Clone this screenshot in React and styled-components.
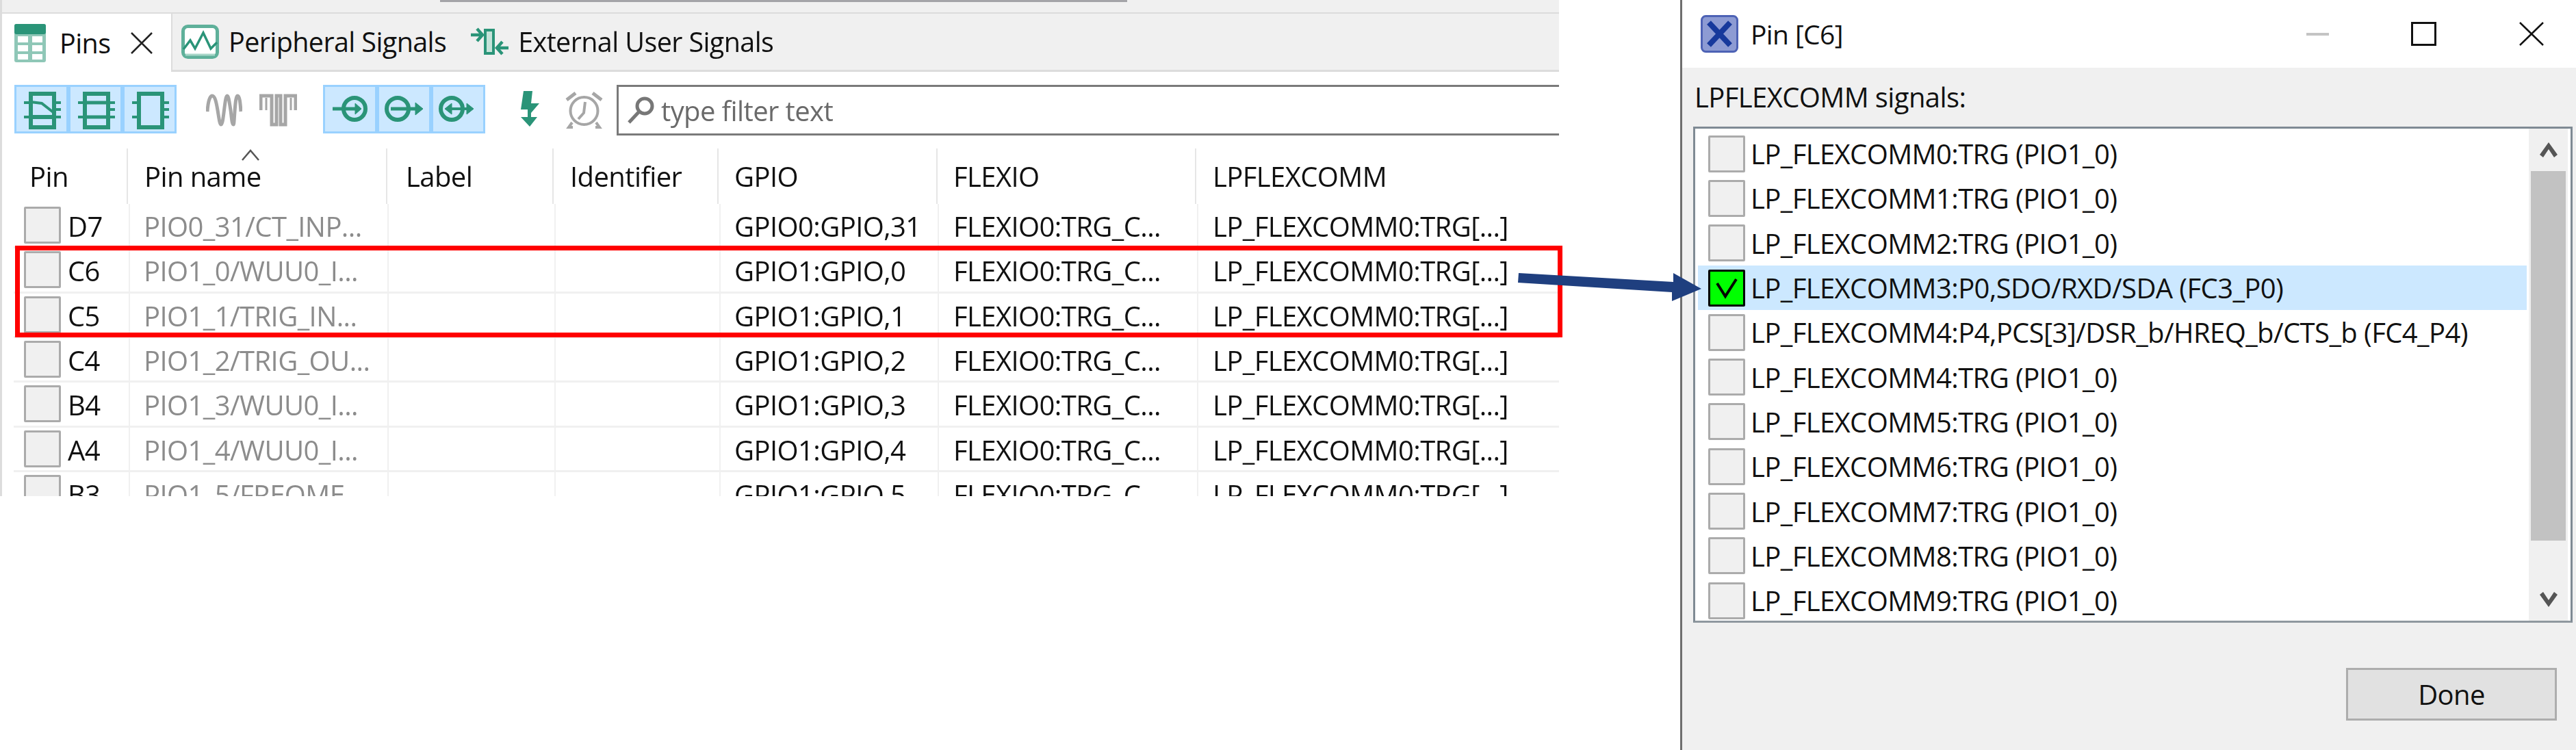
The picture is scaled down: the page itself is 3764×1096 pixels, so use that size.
import React from 'react';
import styled, { createGlobalStyle } from 'styled-components';

const GREEN = '#2a9478';
const GREY = '#a6a6a6';

const GlobalStyle = createGlobalStyle`
    html, body {
        margin: 0;
        padding: 0;
        background: #fff;
    }
    body {
        font-family: "Open Sans", "Noto Sans", sans-serif;
        font-size: 40px;
        font-stretch: 90%;
        letter-spacing: -0.6px;
        color: #111;
    }
`;

const Page = styled.div`
    position: relative;
    width: 3764px;
    height: 1096px;
    overflow: hidden;
    background: #fff;
`;

const Content = styled.div`
    display: flex;
    justify-content: space-between;
    height: 100%;
    filter: blur(0.4px);
`;

const PinsPanel = styled.div`
    box-sizing: border-box;
    width: 2278px;
    height: 725px;
    border-left: 3px solid #dcdcdc;
    overflow: hidden;
`;

const TopStrip = styled.div`
    box-sizing: border-box;
    height: 20px;
    background: #f0f0f0;
    border-bottom: 2px solid #dcdcdc;
`;

const TopBar = styled.div`
    width: 1004px;
    height: 3px;
    margin-left: 640px;
    background: #a4a4a8;
`;

const TabStrip = styled.div`
    box-sizing: border-box;
    display: flex;
    height: 85px;
    font-size: 39.5px;
    background: #f0f0f0;
    border-bottom: 3px solid #dcdcdc;
`;

const ActiveTab = styled.div`
    box-sizing: border-box;
    display: flex;
    align-items: center;
    width: 249px;
    height: 85px;
    padding-left: 18px;
    gap: 20px;
    background: #fff;
    border-right: 2px solid #dcdcdc;
`;

const Tab = styled.div`
    display: flex;
    align-items: center;
    gap: 14px;
    margin-left: ${props => props.$offset}px;
`;

const CloseIcon = styled.svg`
    margin-left: 9px;
`;

const Toolbar = styled.div`
    display: flex;
    align-items: flex-start;
    height: 74px;
    padding: 19px 0 0 18px;
`;

const ToggleGroup = styled.div`
    display: flex;
    margin-right: ${props => props.$gap}px;
`;

const ToggleCell = styled.div`
    box-sizing: border-box;
    width: 79px;
    height: 71px;
    background: #cce8ff;
    border: 3px solid #99d1ff;
    svg {
        display: block;
        margin: -3px;
    }
`;

const ToolIcon = styled.svg`
    flex: none;
    margin: ${props => props.$top}px ${props => props.$right}px 0 0;
`;

const FilterBox = styled.div`
    box-sizing: border-box;
    display: flex;
    align-items: center;
    flex: 1;
    gap: 9px;
    height: 74px;
    margin-left: 20px;
    padding-left: 13px;
    background: #fff;
    border: 3px solid #7a7a7a;
    border-right: 0;
    color: #6a6a6a;
`;

const HeaderRow = styled.div`
    display: grid;
    grid-template-columns: 184px 379px 243px 241px 320px 378px 530px;
    height: 81px;
    margin-top: 19px;
`;

const HeaderCell = styled.div`
    position: relative;
    display: flex;
    align-items: center;
    padding-left: ${props => props.$pad}px;
    border-right: 2px solid #e6e6e6;
    &:last-child {
        border-right: 0;
    }
`;

const SortCaret = styled.svg`
    position: absolute;
    left: 165px;
    top: 0;
`;

const PinRow = styled.div`
    box-sizing: border-box;
    display: grid;
    grid-template-columns: 170px 378px 244px 241px 319px 379px 527px;
    height: 65.33px;
    margin-left: 17px;
    border-bottom: 3px solid #f0f0f0;
`;

const PinCell = styled.div`
    display: flex;
    align-items: center;
    padding-left: ${props => props.$pad}px;
    white-space: nowrap;
    color: ${props => (props.$muted ? '#8c8c8c' : 'inherit')};
    border-right: 2px solid #f0f0f0;
    &:last-child {
        border-right: 0;
    }
`;

const PinText = styled.span`
    padding-top: 3px;
`;

const CheckBox = styled.span`
    box-sizing: border-box;
    display: flex;
    align-items: center;
    justify-content: center;
    flex: none;
    width: 54px;
    height: 54px;
    margin-right: ${props => props.$gap}px;
    background: ${props => (props.$checked ? '#00ff00' : '#f0f0f0')};
    border: 3px solid ${props => (props.$checked ? '#000' : '#ababab')};
    border-radius: 2px;
`;

const Dialog = styled.div`
    box-sizing: border-box;
    display: flex;
    flex-direction: column;
    width: 1309px;
    height: 1096px;
    background: #f0f0f0;
    border-left: 3px solid #6e6e6e;
`;

const TitleBar = styled.div`
    display: flex;
    align-items: center;
    height: 99px;
    padding-left: 27px;
    background: #fff;
`;

const DialogTitle = styled.div`
    flex: 1;
    margin-left: 18px;
    font-size: 39px;
`;

const WindowButton = styled.svg`
    margin-right: ${props => props.$right}px;
`;

const SignalsLabel = styled.div`
    height: 86px;
    line-height: 86px;
    margin-left: 18px;
`;

const ListBox = styled.div`
    box-sizing: border-box;
    display: flex;
    height: 725px;
    margin: 0 5px 0 16px;
    background: #fff;
    border: 3px solid #7f8a94;
    border-bottom-color: #8f989f;
`;

const SignalList = styled.div`
    flex: 1;
    padding: 4px 3px 0 4px;
    overflow: hidden;
`;

const SignalRow = styled.div`
    display: flex;
    align-items: center;
    height: 65.3px;
    padding-left: 15px;
    white-space: nowrap;
    background: ${props => (props.$selected ? '#cce8ff' : 'transparent')};
`;

const ScrollBar = styled.div`
    display: flex;
    flex-direction: column;
    width: 57px;
    margin-right: 4px;
    background: #f0f0f0;
`;

const ScrollButton = styled.div`
    display: flex;
    align-items: center;
    justify-content: center;
    height: 62px;
`;

const ScrollThumb = styled.div`
    height: 540px;
    margin: 0 3px;
    background: #c2c2c2;
`;

const ScrollTrack = styled.div`
    flex: 1;
`;

const DialogFooter = styled.div`
    display: flex;
    justify-content: flex-end;
    margin-top: 66px;
    padding-right: 28px;
`;

const DoneButton = styled.div`
    box-sizing: border-box;
    display: flex;
    align-items: center;
    justify-content: center;
    width: 308px;
    height: 77px;
    background: #e1e1e1;
    border: 3px solid #adadad;
`;

const Highlight = styled.div`
    position: absolute;
    left: 22px;
    top: 359px;
    box-sizing: border-box;
    width: 2261px;
    height: 134px;
    border: 7px solid #ff0000;
`;

const LinkArrow = styled.svg`
    position: absolute;
    left: 2200px;
    top: 390px;
`;

const PINS = [
    ['D7', 'PIO0_31/CT_INP...', 'GPIO0:GPIO,31'],
    ['C6', 'PIO1_0/WUU0_I...', 'GPIO1:GPIO,0'],
    ['C5', 'PIO1_1/TRIG_IN...', 'GPIO1:GPIO,1'],
    ['C4', 'PIO1_2/TRIG_OU...', 'GPIO1:GPIO,2'],
    ['B4', 'PIO1_3/WUU0_I...', 'GPIO1:GPIO,3'],
    ['A4', 'PIO1_4/WUU0_I...', 'GPIO1:GPIO,4'],
    ['B3', 'PIO1_5/FREQME...', 'GPIO1:GPIO,5'],
];

const SIGNALS = [
    'LP_FLEXCOMM0:TRG (PIO1_0)',
    'LP_FLEXCOMM1:TRG (PIO1_0)',
    'LP_FLEXCOMM2:TRG (PIO1_0)',
    'LP_FLEXCOMM3:P0,SDO/RXD/SDA (FC3_P0)',
    'LP_FLEXCOMM4:P4,PCS[3]/DSR_b/HREQ_b/CTS_b (FC4_P4)',
    'LP_FLEXCOMM4:TRG (PIO1_0)',
    'LP_FLEXCOMM5:TRG (PIO1_0)',
    'LP_FLEXCOMM6:TRG (PIO1_0)',
    'LP_FLEXCOMM7:TRG (PIO1_0)',
    'LP_FLEXCOMM8:TRG (PIO1_0)',
    'LP_FLEXCOMM9:TRG (PIO1_0)',
];

const HEADERS = [
    ['Pin', 40],
    ['Pin name', 24],
    ['Label', 27],
    ['Identifier', 24],
    ['GPIO', 23],
    ['FLEXIO', 23],
    ['LPFLEXCOMM', 24],
];

const TableIcon = () => (
    <svg width="46" height="56" viewBox="0 0 46 56">
        <rect x="0" y="0" width="46" height="56" rx="3" fill="#8fc7b7" />
        <rect x="0" y="0" width="46" height="15" rx="3" fill={GREEN} />
        <rect x="5" y="18" width="15" height="9" fill="#fff" />
        <rect x="26" y="18" width="15" height="9" fill="#fff" />
        <rect x="5" y="31" width="15" height="9" fill="#fff" />
        <rect x="26" y="31" width="15" height="9" fill="#fff" />
        <rect x="5" y="44" width="15" height="8" fill="#fff" />
        <rect x="26" y="44" width="15" height="8" fill="#fff" />
    </svg>
);

const SignalsIcon = () => (
    <svg width="55" height="50" viewBox="0 0 55 50" fill="none">
        <rect x="2.5" y="2.5" width="50" height="45" rx="7" fill="#fff" stroke="#5fb09a" strokeWidth="5" />
        <path d="M3 36 L13 23 L20 35 L32 12 L43 35 L52 26" stroke={GREEN} strokeWidth="3.5" />
        <path d="M6 44 H49" stroke="#a8d5c8" strokeWidth="3" />
    </svg>
);

const ExternalIcon = () => (
    <svg width="55" height="48" viewBox="0 0 55 48" fill="none" stroke={GREEN}>
        <rect x="21" y="7" width="12" height="34" fill="#c5e3da" strokeWidth="4" />
        <path d="M0 14 H16 M9 5 L17 14 L9 23" strokeWidth="4.5" />
        <path d="M55 33 H38 M46 24 L38 33 L46 42" strokeWidth="4.5" />
    </svg>
);

const ChipIcon = ({ variant }) => (
    <svg width="79" height="71" viewBox="0 0 79 71" fill="none" stroke={GREEN}>
        <path d="M14 26 H21 M14 47 H21 M61 26 H68 M61 36 H68 M61 47 H68" strokeWidth="4" />
        <rect x="24" y="13" width="34" height="49" strokeWidth="6" />
        {variant === 'analog' && <path d="M24 25 L40 27 L58 41" strokeWidth="4" />}
        {variant === 'analog' && <path d="M24 47 H58" strokeWidth="6" />}
        {variant === 'lines' && <path d="M24 26 H58 M24 47 H58" strokeWidth="5" />}
    </svg>
);

const PinModeIcon = ({ mode }) => (
    <svg width="79" height="71" viewBox="0 0 79 71" fill="none" stroke={GREEN}>
        <circle cx={mode === 'in' ? 46 : 30} cy="35" r="16" strokeWidth="6" />
        {mode === 'in' && <path d="M14 35 H48" strokeWidth="5" />}
        {mode === 'in' && <path d="M47 27 L56 35 L47 43 Z" fill={GREEN} strokeWidth="1" />}
        {mode === 'out' && <path d="M20 35 H58" strokeWidth="5" />}
        {mode === 'out' && <path d="M56 26 L67 35 L56 44 Z" fill={GREEN} strokeWidth="1" />}
        {mode === 'both' && <path d="M26 35 H56" strokeWidth="4" />}
        {mode === 'both' && <path d="M30 27 L20 35 L30 43 Z M52 27 L62 35 L52 43 Z" fill={GREEN} strokeWidth="1" />}
    </svg>
);

const SineIcon = () => (
    <ToolIcon $top={13} $right={25} width="53" height="48" viewBox="0 0 53 48" fill="none" stroke={GREY} strokeWidth="5">
        <path d="M2 26 C3 10 6 3 9 3 C13 3 15 12 17 24 C19 36 20 45 22 45 C24 45 25 36 26.5 24 C28 12 29 3 31 3 C33 3 34 12 36 24 C37.5 36 38 45 40 45 C41 45 41 40 42 26 C43 12 44 3 46 3 C49 3 50 12 51 26" />
    </ToolIcon>
);

const SquareWaveIcon = () => (
    <ToolIcon $top={13} $right={38} width="55" height="48" viewBox="0 0 55 48" fill="none" stroke={GREY} strokeWidth="5">
        <path d="M2 24 V3 H18 V45 H25 V3 H31 V45 H38 V3 H53 V24" />
        <path d="M10 6 V24 M46 6 V24" strokeWidth="3" />
    </ToolIcon>
);

const BoltIcon = () => (
    <ToolIcon $top={9} $right={38} width="27" height="53" viewBox="0 0 27 53" fill={GREEN}>
        <path d="M4 0 H17 L15 18 H27 L15 32 V38 H24 L13 52 L0 38 H10 V27 H0 Z" />
    </ToolIcon>
);

const AlarmIcon = () => (
    <ToolIcon $top={9} $right={0} width="55" height="55" viewBox="0 0 55 55" fill="none" stroke={GREY} strokeWidth="4">
        <circle cx="27.5" cy="29" r="20" />
        <path d="M2 13 L15 3 M53 13 L40 3" strokeWidth="5" />
        <path d="M29 16 L27 32 L19 41" />
        <path d="M10 46 L5 53 H11 M45 46 L50 53 H44" />
    </ToolIcon>
);

const SearchIcon = () => (
    <svg width="40" height="40" viewBox="0 0 40 40" fill="none" stroke="#777" strokeWidth="5">
        <circle cx="25" cy="14" r="11" />
        <path d="M17 22 L2 38" />
    </svg>
);

const Check = () => (
    <svg width="34" height="32" viewBox="0 0 34 32" fill="none" stroke="#000" strokeWidth="4">
        <path d="M3 9 L15 28 L31 3" />
    </svg>
);

const App = () => (
    <Page>
        <GlobalStyle />
        <Content>
            <PinsPanel>
                <TopStrip>
                    <TopBar />
                </TopStrip>
                <TabStrip>
                    <ActiveTab>
                        <TableIcon />
                        Pins
                        <CloseIcon width="34" height="32" viewBox="0 0 34 32" stroke="#222" strokeWidth="2.5">
                            <path d="M2 1 L32 31 M32 1 L2 31" />
                        </CloseIcon>
                    </ActiveTab>
                    <Tab $offset={13}>
                        <SignalsIcon />
                        Peripheral Signals
                    </Tab>
                    <Tab $offset={36}>
                        <ExternalIcon />
                        External User Signals
                    </Tab>
                </TabStrip>
                <Toolbar>
                    <ToggleGroup $gap={43}>
                        <ToggleCell><ChipIcon variant="analog" /></ToggleCell>
                        <ToggleCell><ChipIcon variant="lines" /></ToggleCell>
                        <ToggleCell><ChipIcon /></ToggleCell>
                    </ToggleGroup>
                    <SineIcon />
                    <SquareWaveIcon />
                    <ToggleGroup $gap={52}>
                        <ToggleCell><PinModeIcon mode="in" /></ToggleCell>
                        <ToggleCell><PinModeIcon mode="out" /></ToggleCell>
                        <ToggleCell><PinModeIcon mode="both" /></ToggleCell>
                    </ToggleGroup>
                    <BoltIcon />
                    <AlarmIcon />
                    <FilterBox>
                        <SearchIcon />
                        type filter text
                    </FilterBox>
                </Toolbar>
                <HeaderRow>
                    {HEADERS.map(([title, pad]) => (
                        <HeaderCell key={title} $pad={pad}>
                            {title}
                            {title === 'Pin name' && (
                                <SortCaret width="28" height="18" viewBox="0 0 28 18" fill="none" stroke="#555" strokeWidth="2.5">
                                    <path d="M2 17 L14 3 L26 17" />
                                </SortCaret>
                            )}
                        </HeaderCell>
                    ))}
                </HeaderRow>
                {PINS.map(([pin, name, gpio]) => (
                    <PinRow key={pin}>
                        <PinCell $pad={15}>
                            <CheckBox $gap={10} />
                            <PinText>{pin}</PinText>
                        </PinCell>
                        <PinCell $pad={20} $muted><PinText>{name}</PinText></PinCell>
                        <PinCell />
                        <PinCell />
                        <PinCell $pad={20}><PinText>{gpio}</PinText></PinCell>
                        <PinCell $pad={21}><PinText>FLEXIO0:TRG_C...</PinText></PinCell>
                        <PinCell $pad={21}><PinText>LP_FLEXCOMM0:TRG[...]</PinText></PinCell>
                    </PinRow>
                ))}
            </PinsPanel>
            <Dialog>
                <TitleBar>
                    <svg width="55" height="55" viewBox="0 0 55 55">
                        <rect x="1.5" y="1.5" width="52" height="52" rx="6" fill="#8d9bd3" stroke="#4d62b5" strokeWidth="3" />
                        <path d="M12 11 L43 44 M43 11 L12 44" stroke="#17399c" strokeWidth="8" />
                    </svg>
                    <DialogTitle>Pin [C6]</DialogTitle>
                    <WindowButton $right={120} width="33" height="4" viewBox="0 0 33 4">
                        <rect width="33" height="4" fill="#c4c4c4" />
                    </WindowButton>
                    <WindowButton $right={120} width="37" height="35" viewBox="0 0 37 35" fill="none" stroke="#111" strokeWidth="3">
                        <rect x="1.5" y="1.5" width="34" height="32" />
                    </WindowButton>
                    <WindowButton $right={46} width="38" height="35" viewBox="0 0 38 35" stroke="#111" strokeWidth="2.5">
                        <path d="M2 1 L36 34 M36 1 L2 34" />
                    </WindowButton>
                </TitleBar>
                <SignalsLabel>LPFLEXCOMM signals:</SignalsLabel>
                <ListBox>
                    <SignalList>
                        {SIGNALS.map((signal, i) => (
                            <SignalRow key={signal} $selected={i === 3}>
                                <CheckBox $gap={8} $checked={i === 3}>
                                    {i === 3 && <Check />}
                                </CheckBox>
                                {signal}
                            </SignalRow>
                        ))}
                    </SignalList>
                    <ScrollBar>
                        <ScrollButton>
                            <svg width="26" height="22" viewBox="0 0 26 22" fill="#555">
                                <path d="M13 0 L26 18 L21 22 L13 10 L5 22 L0 18 Z" />
                            </svg>
                        </ScrollButton>
                        <ScrollThumb />
                        <ScrollTrack />
                        <ScrollButton>
                            <svg width="26" height="22" viewBox="0 0 26 22" fill="#555">
                                <path d="M13 22 L26 4 L21 0 L13 12 L5 0 L0 4 Z" />
                            </svg>
                        </ScrollButton>
                    </ScrollBar>
                </ListBox>
                <DialogFooter>
                    <DoneButton>Done</DoneButton>
                </DialogFooter>
            </Dialog>
        </Content>
        <Highlight />
        <LinkArrow width="300" height="60" viewBox="2200 390 300 60" fill="#1f3f7f">
            <polygon points="2219,399 2445,412 2445,399 2486,422 2443,440 2443,427 2218,413" />
        </LinkArrow>
    </Page>
);

export default App;
